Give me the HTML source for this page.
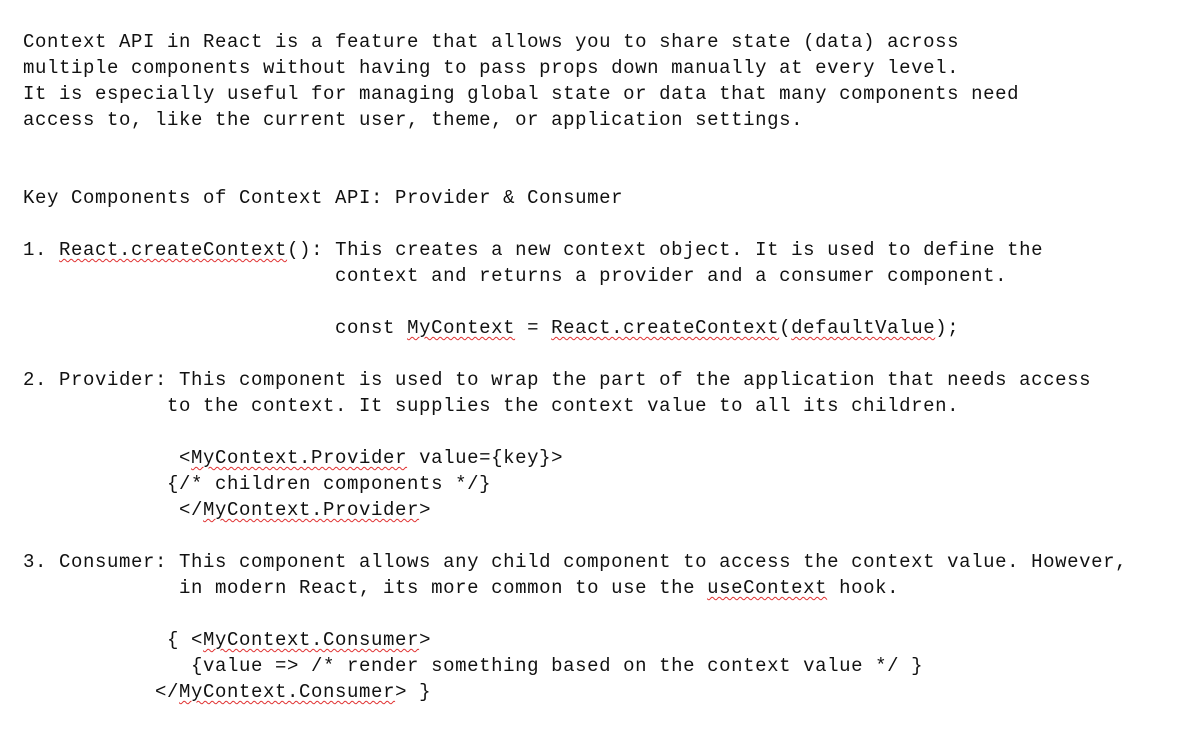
<!DOCTYPE html>
<html><head><meta charset="utf-8"><style>
html,body{margin:0;padding:0;background:#fff;width:1191px;height:753px;overflow:hidden}
pre{margin:0;position:absolute;left:23px;top:29px;font-family:"Liberation Mono",monospace;font-size:19px;letter-spacing:0.6px;line-height:26px;color:#111}
u{text-decoration:underline wavy #e03030;text-decoration-thickness:1px;text-underline-offset:3px}
</style></head><body>
<pre>Context API in React is a feature that allows you to share state (data) across
multiple components without having to pass props down manually at every level.
It is especially useful for managing global state or data that many components need
access to, like the current user, theme, or application settings.


Key Components of Context API: Provider &amp; Consumer

1. <u>React.createContext</u>(): This creates a new context object. It is used to define the
                          context and returns a provider and a consumer component.

                          const <u>MyContext</u> = <u>React.createContext</u>(<u>defaultValue</u>);

2. Provider: This component is used to wrap the part of the application that needs access
            to the context. It supplies the context value to all its children.

             &lt;<u>MyContext.Provider</u> value={key}&gt;
            {/* children components */}
             &lt;/<u>MyContext.Provider</u>&gt;

3. Consumer: This component allows any child component to access the context value. However,
             in modern React, its more common to use the <u>useContext</u> hook.

            { &lt;<u>MyContext.Consumer</u>&gt;
              {value =&gt; /* render something based on the context value */ }
           &lt;/<u>MyContext.Consumer</u>&gt; }</pre>
</body></html>
